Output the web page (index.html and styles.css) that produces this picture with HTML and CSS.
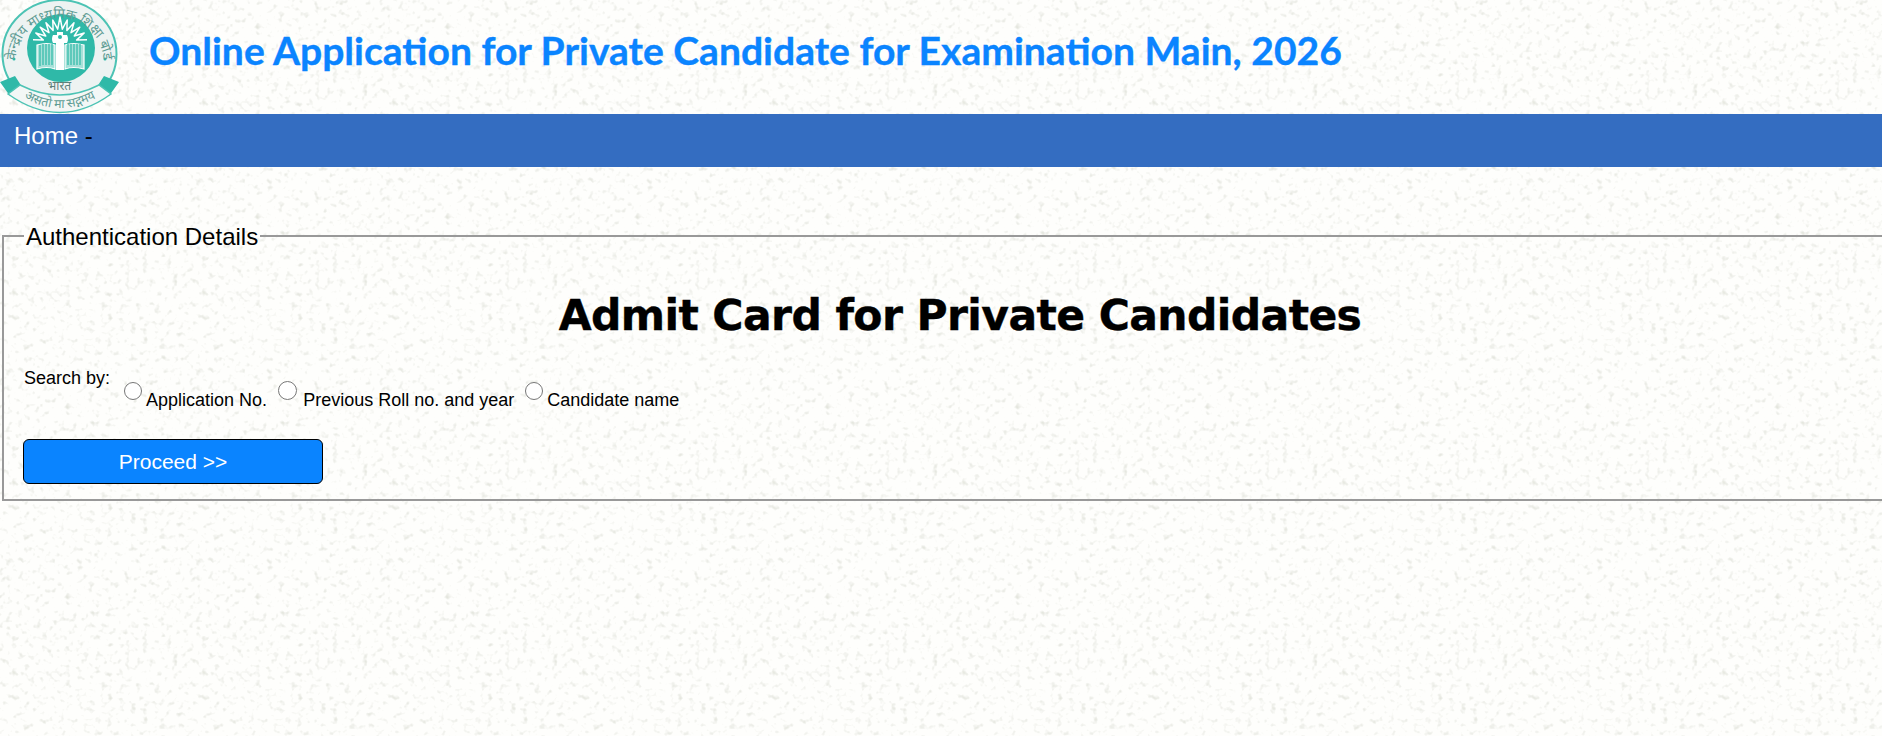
FILE: index.html
```html
<!DOCTYPE html>
<html lang="en">
<head>
<meta charset="utf-8">
<title>Admit Card for Private Candidates</title>
<link rel="stylesheet" href="styles.css">
</head>
<body>
<header class="masthead">
  <svg class="logo" viewBox="0 0 120 114" aria-label="CBSE logo">
    <defs>
      <path id="arcTop" d="M15.500 62 A44 44 0 1 1 103.500 62"/>
      <path id="arcBottom" d="M18 94 Q60 122 102 94"/>
    </defs>
    <ellipse cx="59.500" cy="54" rx="57" ry="54" fill="#edf3f2" stroke="#4cc3b4" stroke-width="2"/>
    <circle cx="61" cy="48" r="34" fill="#2fb9a8"/>
    <path class="logo-ray" d="M33 39.800 43.400 40.100 35.800 33 45.700 36 40.200 27.200 49 32.700 46 22.800 53.100 30.400 52.800 20 57.700 29.200 60 17 62.300 29.200 67.200 20 66.900 30.400 74 22.800 71 32.700 79.800 27.200 74.300 36 84.200 33 76.600 40.100 87 39.800"/>
    <path class="logo-book" d="M37 45 Q47 42 55 45 V69 Q47 66 37 69Z M65 45 Q73 42 84 45 V69 Q73 66 65 69Z"/>
    <path class="logo-stripes" d="M40 45v21M43 44v21M46 44v21M49 44v21M52 44v21M68 44v21M71 44v21M74 44v21M77 44v21M80 44v21"/>
    <path class="logo-lamp" d="M56 70V43h-3q-2-4 0-8h4v-3h6v3h4q2 4 0 8h-3v27z"/>
    <circle cx="60" cy="37" r="2" fill="#2fb9a8"/>
    <circle cx="14" cy="59" r="1.500" fill="#2fb9a8"/>
    <circle cx="105" cy="59" r="1.500" fill="#2fb9a8"/>
    <path d="M0 82 L15 76 L24 90 L10 96Z M119 82 L104 76 L95 90 L109 96Z" fill="#2fb9a8"/>
    <path d="M8 94 L20 85 Q60 105 99 85 L111 94 Q60 131 8 94Z" fill="#f3f7f6" stroke="#4cc3b4" stroke-width="1.500"/>
    <text class="logo-text" font-size="13.500"><textPath href="#arcTop" startOffset="50%" text-anchor="middle">केन्द्रीय माध्यमिक शिक्षा बोर्ड</textPath></text>
    <text class="logo-text logo-text-dark" x="59.500" y="90" font-size="12" text-anchor="middle">भारत</text>
    <text class="logo-text" font-size="12.500"><textPath href="#arcBottom" startOffset="50%" text-anchor="middle">असतो मा सद्गमय</textPath></text>
  </svg>
  <h2 class="site-title">Online Application for Private Candidate for Examination Main, 2026</h2>
</header>
<nav class="nav"><a class="nav-link" href="#">Home</a> -</nav>
<main class="content">
  <fieldset class="panel">
    <legend class="panel-legend">Authentication Details</legend>
    <h1 class="panel-heading">Admit Card for Private Candidates</h1>
    <div class="search-row">
      <span class="search-label">Search by:</span>
      <label class="option"><input class="radio" type="radio" name="by"><span>Application No.</span></label>
      <label class="option option-wide"><input class="radio radio-large" type="radio" name="by"><span>Previous Roll no. and year</span></label>
      <label class="option"><input class="radio" type="radio" name="by"><span>Candidate name</span></label>
    </div>
    <button class="proceed" type="button">Proceed &gt;&gt;</button>
  </fieldset>
</main>
</body>
</html>
```
FILE: styles.css
```css
html { overflow: hidden; height: 100%; }
body {
  margin: 0;
  height: 100%;
  overflow: hidden;
  font-family: "Liberation Sans", Arial, sans-serif;
  background-color: #fefefc;
  background-image: url("data:image/svg+xml,%3Csvg xmlns='http://www.w3.org/2000/svg' width='190' height='190'%3E%3Cfilter id='n' x='0' y='0' width='100%25' height='100%25'%3E%3CfeTurbulence type='fractalNoise' baseFrequency='.17' numOctaves='2' seed='11' stitchTiles='stitch'/%3E%3CfeColorMatrix values='0 0 0 0 .66 0 0 0 0 .68 0 0 0 0 .6 1.9 0 0 0 -1.08'/%3E%3C/filter%3E%3Crect width='190' height='190' filter='url(%23n)'/%3E%3C/svg%3E");
}
.masthead { display: flex; align-items: flex-start; height: 114px; }
.logo { width: 120px; height: 114px; flex: none; }
.logo-ray { fill: none; stroke: #fff; stroke-width: 1.5; stroke-linejoin: round; }
.logo-book { fill: #a6e0d8; stroke: #fff; stroke-width: 1.2; }
.logo-stripes { fill: none; stroke: #2fb9a8; stroke-width: 1.2; }
.logo-lamp { fill: #fff; }
.logo-text { fill: #5f9c94; font-family: "Noto Sans", "DejaVu Sans", sans-serif; }
.logo-text-dark { fill: #5c7f7a; }
.site-title {
  margin: 26px 0 0 29px;
  font-family: Lato, sans-serif;
  font-weight: 700;
  font-size: 39.05px;
  line-height: 47px;
  color: #0a84ff;
  white-space: nowrap;
  -webkit-text-stroke: .35px #0a84ff;
}
.nav {
  height: 53px;
  box-sizing: border-box;
  padding: 8px 14px;
  background: #346dc1;
  font-size: 24px;
  line-height: 28px;
  color: #000;
}
.nav-link { color: #fff; text-decoration: none; }
.content { padding: 55px 0 0 2px; width: 1896px; }
.panel {
  margin: 0;
  padding: 0 0 15px 20px;
  border: 2px solid #999;
  min-width: 0;
}
.panel-legend { padding: 2px 2px 0; font-size: 24px; line-height: 26px; color: #000; }
.panel-heading {
  margin: 41px 0 27px;
  font-family: "DejaVu Sans", Verdana, sans-serif;
  font-size: 42.5px;
  font-weight: 700;
  letter-spacing: -.6px;
  line-height: 50px;
  text-align: center;
  color: #000;
  -webkit-text-stroke: .4px #000;
}
.search-row { display: flex; align-items: flex-start; font-size: 18px; color: #000; }
.search-label { margin-right: 14px; line-height: 21px; }
.option { display: flex; align-items: flex-start; margin-right: 11px; }
.option span { margin-top: 22px; margin-left: 4px; line-height: 21px; }
.option-wide span { margin-left: 6px; }
.radio { width: 18px; height: 18px; margin: 14px 0 0; accent-color: #767676; }
.radio-large { width: 19px; height: 19px; margin-top: 13px; }
.proceed {
  display: block;
  width: 300px;
  height: 45px;
  margin-top: 28px;
  margin-left: -1px;
  border: 1px solid #000;
  border-radius: 6px;
  background: #0a84ff;
  color: #fff;
  font: 21px "Liberation Sans", Arial, sans-serif;
}
```
